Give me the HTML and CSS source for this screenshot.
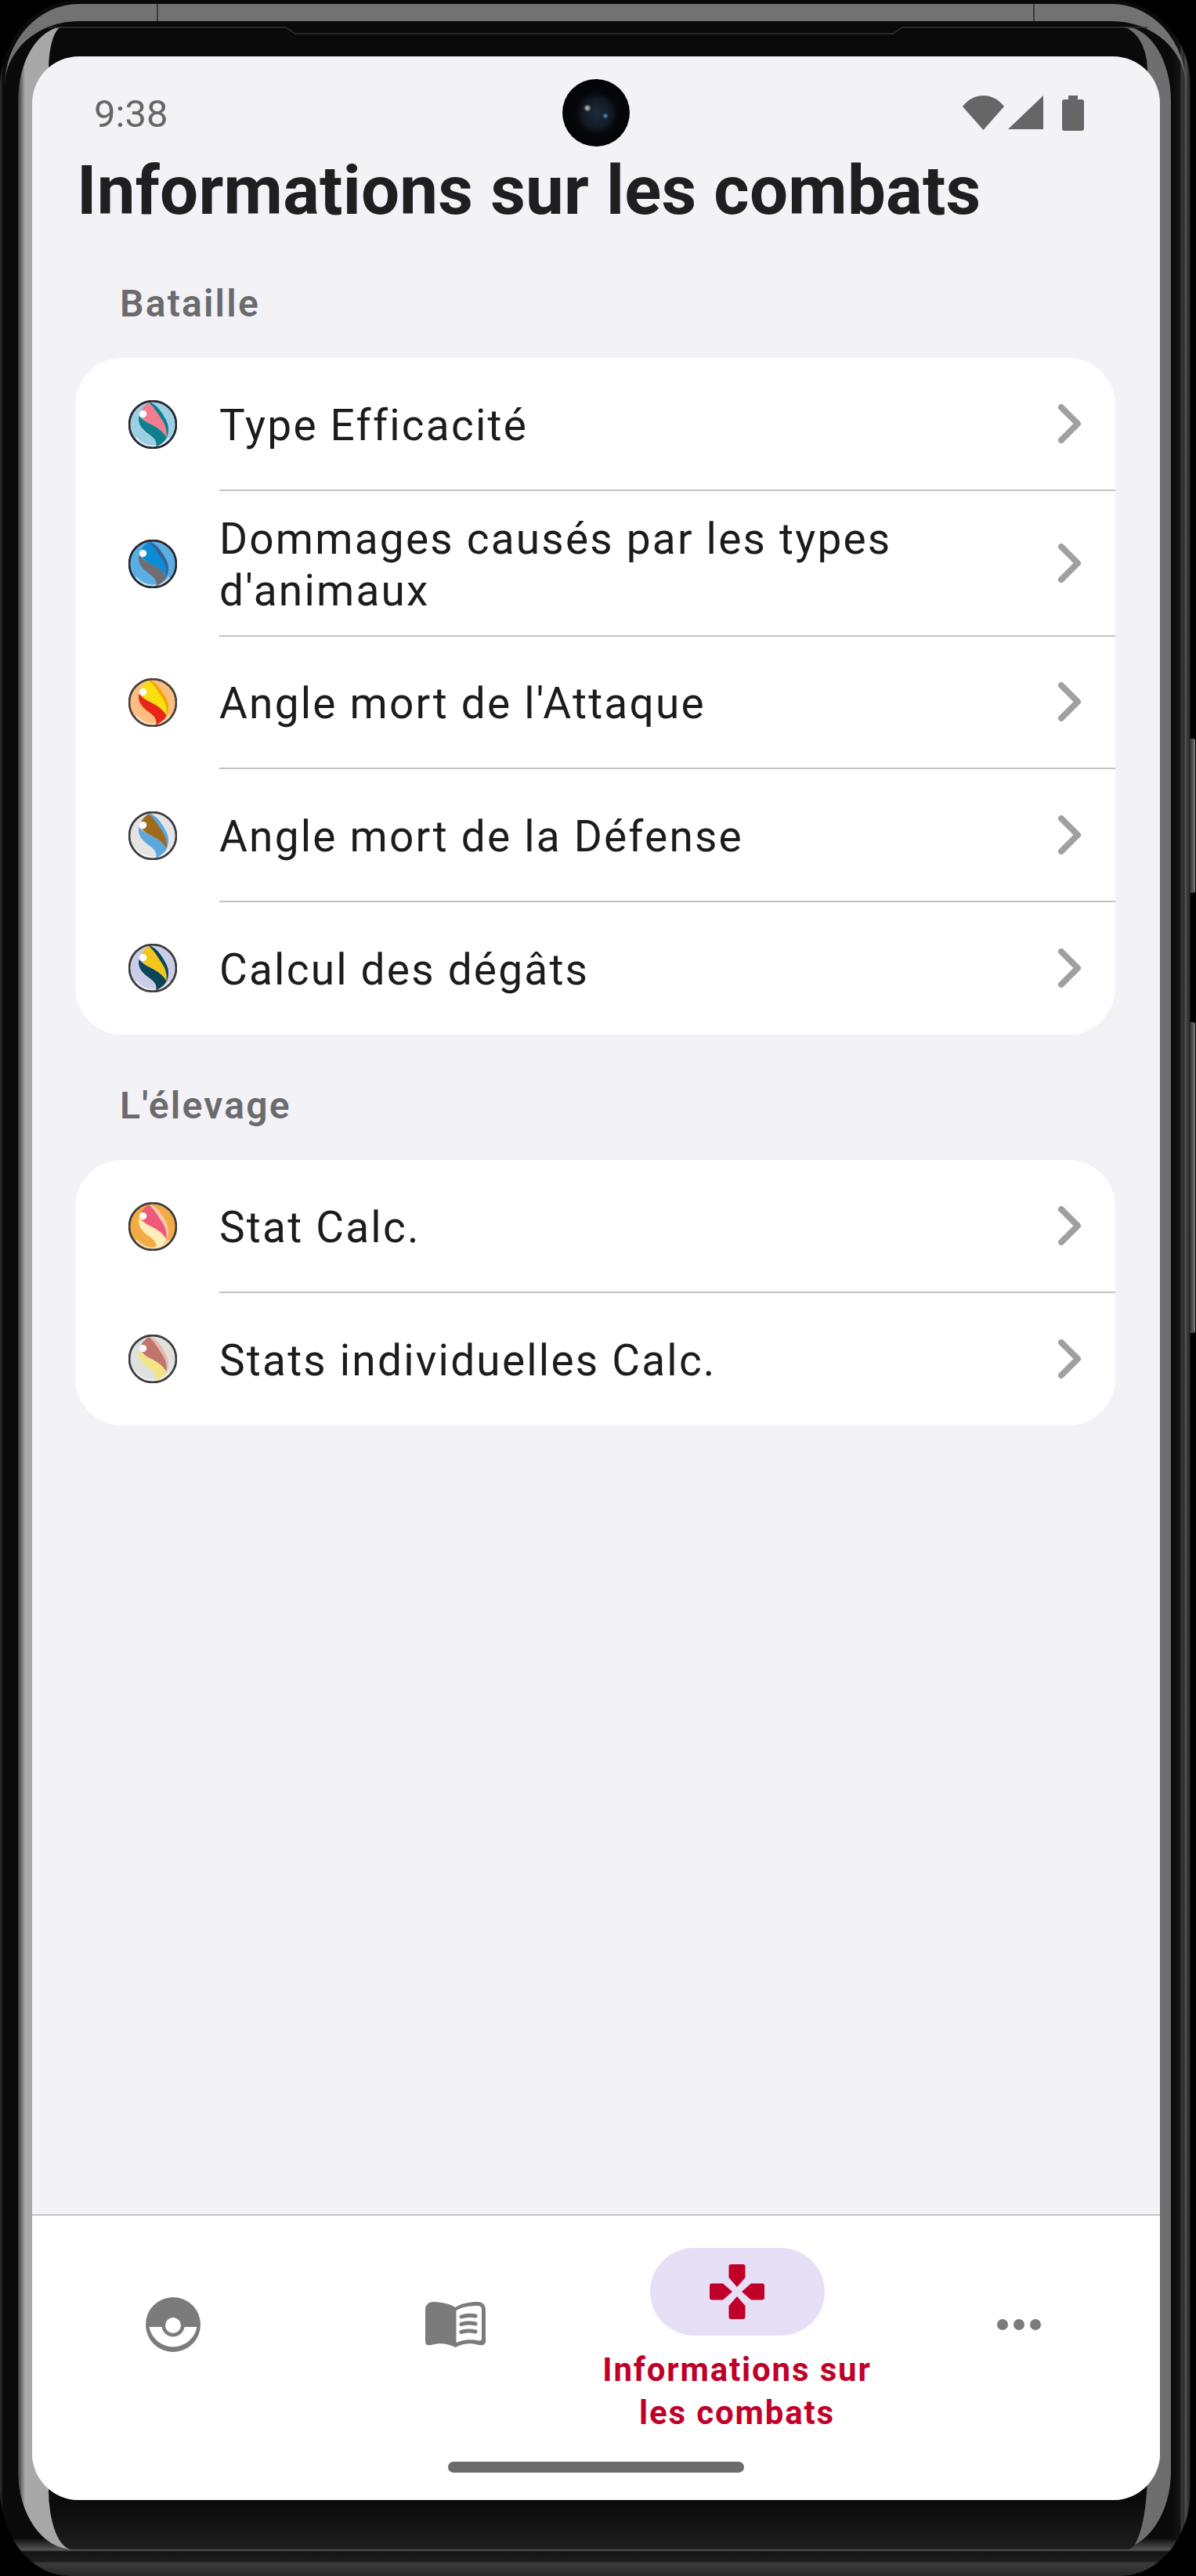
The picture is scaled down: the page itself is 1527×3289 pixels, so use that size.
FILE: index.html
```html
<!DOCTYPE html>
<html lang="fr">
<head>
    <meta charset="UTF-8">
    <meta name="viewport" content="width=device-width, initial-scale=1.0">
    <title>Informations sur les combats</title>
    <link rel="stylesheet" href="styles.css">
</head>
<body>
    <svg class="defs" width="0" height="0" aria-hidden="true">
        <symbol id="orb" viewBox="0 0 60 60">
            <circle class="orbBg" cx="30" cy="30" r="28.5"/>
            <path class="orbShine" d="M9 47A27 27 0 0 0 51 47"/>
            <path class="orbC" d="M26 2C36 7 40 13 45 22C50 30 51 38 47 47C45 36 40 24 32 16C29 12 27 7 26 2Z"/>
            <path class="orbA" d="M25 3C31 8 35 14 40 22C45 29 48 36 47 46C42 38 36 34 28 30C20 26 15 22 15 14C17 9 21 6 25 3Z"/>
            <path class="orbB" d="M13 19C11 28 16 35 24 41C31 46 36 50 34 58C41 54 46 50 47 46C42 38 36 34 28 30C20 26 15 22 13 19Z"/>
            <circle class="orbDot" cx="18" cy="17" r="4.5"/>
            <circle class="orbRing" cx="30" cy="30" r="29"/>
        </symbol>
        <symbol id="chevron" viewBox="0 0 30 50">
            <path d="M4 4L25 25L4 46" fill="none" stroke="#a0a0a0" stroke-width="8" stroke-linecap="round" stroke-linejoin="round"/>
        </symbol>
    </svg>

    <div class="device">
        <div class="sideButton powerBtn"></div>
        <div class="sideButton volumeBtn"></div>
        <div class="rim">
            <div class="bezel">
                <svg class="notchLine" viewBox="0 0 1403 10" aria-hidden="true">
                    <path d="M0 1H303L315 9H1078L1090 1H1403" fill="none" stroke="#333" stroke-width="1.5"/>
                </svg>
                <div class="screen">
                    <div class="camera"></div>
                    <div class="statusBar">
                        <span class="clock">9:38</span>
                        <div class="statusIcons">
                            <svg class="wifiIcon" viewBox="0 0 53 44"><path d="M0 14C7 5 16 0 26.5 0S46 5 53 14L26.5 44Z"/></svg>
                            <svg class="signalIcon" viewBox="0 0 45 43"><path d="M45 0V43H0Z"/></svg>
                            <svg class="batteryIcon" viewBox="0 0 28 45"><path d="M8 0H20V5H25Q28 5 28 8V42Q28 45 25 45H3Q0 45 0 42V8Q0 5 3 5H8Z"/></svg>
                        </div>
                    </div>

                    <main class="content">
                        <h1>Informations sur les combats</h1>

                        <h2>Bataille</h2>
                        <div class="card">
                            <div class="row">
                                <svg class="orb orbWater"><use href="#orb"/></svg>
                                <div class="rowBody"><span>Type Efficacité</span><svg class="chevron"><use href="#chevron"/></svg></div>
                            </div>
                            <div class="row">
                                <svg class="orb orbBlue"><use href="#orb"/></svg>
                                <div class="rowBody"><span>Dommages causés par les types d'animaux</span><svg class="chevron"><use href="#chevron"/></svg></div>
                            </div>
                            <div class="row">
                                <svg class="orb orbFire"><use href="#orb"/></svg>
                                <div class="rowBody"><span>Angle mort de l'Attaque</span><svg class="chevron"><use href="#chevron"/></svg></div>
                            </div>
                            <div class="row">
                                <svg class="orb orbGround"><use href="#orb"/></svg>
                                <div class="rowBody"><span>Angle mort de la Défense</span><svg class="chevron"><use href="#chevron"/></svg></div>
                            </div>
                            <div class="row">
                                <svg class="orb orbNight"><use href="#orb"/></svg>
                                <div class="rowBody"><span>Calcul des dégâts</span><svg class="chevron"><use href="#chevron"/></svg></div>
                            </div>
                        </div>

                        <h2>L'élevage</h2>
                        <div class="card">
                            <div class="row">
                                <svg class="orb orbPeach"><use href="#orb"/></svg>
                                <div class="rowBody"><span>Stat Calc.</span><svg class="chevron"><use href="#chevron"/></svg></div>
                            </div>
                            <div class="row">
                                <svg class="orb orbCream"><use href="#orb"/></svg>
                                <div class="rowBody"><span>Stats individuelles Calc.</span><svg class="chevron"><use href="#chevron"/></svg></div>
                            </div>
                        </div>
                    </main>

                    <nav class="bottomNav">
                        <div class="tabs">
                            <div class="tab">
                                <div class="tabIcon">
                                    <svg class="ballIcon" viewBox="0 0 70 70">
                                        <circle cx="35" cy="35" r="35" fill="#7b7b7b"/>
                                        <path d="M4.5 38H65.5A31 31 0 0 1 4.5 38Z" fill="#fff"/>
                                        <circle cx="35" cy="36" r="14.5" fill="#7b7b7b"/>
                                        <circle cx="35" cy="36" r="10" fill="#fff"/>
                                    </svg>
                                </div>
                            </div>
                            <div class="tab">
                                <div class="tabIcon">
                                    <svg class="bookIcon" viewBox="0 0 77 58">
                                        <path d="M0 10C0 4 4 0 10 0C20 0 30 2 38.5 7C46 2 56 0 67 0C73 0 77 4 77 10V50C77 55 73 56 68 55C58 52 48 53 38.5 58C28 53 18 52 8 55C3 56 0 55 0 50Z" fill="#7b7b7b"/>
                                        <path d="M39.5 11C46 7 55 5 67 5C70 5 72 7 72 9V47C72 49 70 50 68 49.5C58 47 48 48 39.5 52Z" fill="#fff"/>
                                        <path d="M46 19Q55 16 64 18M46 28.5Q55 26 64 28M46 38.5Q55 36 64 38" fill="none" stroke="#7b7b7b" stroke-width="5" stroke-linecap="round"/>
                                    </svg>
                                </div>
                            </div>
                            <div class="tab tabActive">
                                <div class="tabIcon">
                                    <svg class="padIcon" viewBox="0 0 70 70">
                                        <g id="padArm"><path d="M24.5 3Q24.5 0 27.5 0H42.5Q45.5 0 45.5 3V17L35 29L24.5 17Z"/></g>
                                        <use href="#padArm" transform="rotate(90 35 35)"/>
                                        <use href="#padArm" transform="rotate(180 35 35)"/>
                                        <use href="#padArm" transform="rotate(270 35 35)"/>
                                    </svg>
                                </div>
                                <span class="tabLabel">Informations sur les combats</span>
                            </div>
                            <div class="tab">
                                <div class="tabIcon">
                                    <svg class="moreIcon" viewBox="0 0 56 14">
                                        <circle cx="7" cy="7" r="7"/><circle cx="28" cy="7" r="7"/><circle cx="49" cy="7" r="7"/>
                                    </svg>
                                </div>
                            </div>
                        </div>
                        <div class="homeBar"></div>
                    </nav>
                </div>
            </div>
        </div>
    </div>
</body>
</html>
```
FILE: styles.css
```css
body {
    margin: 0;
    background: #000;
    font-family: Roboto, "Liberation Sans", sans-serif;
}
.defs {
    position: absolute;
}

/* phone frame */
.device {
    position: relative;
    box-sizing: border-box;
    width: 1520px;
    height: 3289px;
    padding: 34px 25px 0 23px;
    border-radius: 100px 100px 90px 90px / 110px;
    background:
        linear-gradient(90deg, #333 0, #0a0a0a 4px, #0a0a0a 1495px, #141414 1507px, #3c3c3c 1508px, #2a2a2a 1512px, #555 1513px, #1a1a1a 1520px) 0 0 / 100% 3240px no-repeat,
        linear-gradient(180deg, #0a0a0a 3240px, #4c4c4c 3254px, #555 3256px, #141414 3258px, #1c1c1c 3270px, #3c3c3c 3273px, #262626 3289px);
}
/* grey band that runs over the top edge and thins out at the corners */
.device::before {
    content: "";
    position: absolute;
    top: 5px;
    left: 6px;
    right: 6px;
    height: 130px;
    border-top: 22px solid #727272;
    border-radius: 95px 95px 0 0 / 105px 105px 0 0;
}
.device::after {
    content: "";
    position: absolute;
    top: 5px;
    left: 200px;
    width: 1117px;
    height: 22px;
    border-left: 2px solid #3a3a3a;
    border-right: 2px solid #3a3a3a;
}
.sideButton {
    position: absolute;
    right: -6px;
    width: 7px;
    border-radius: 0 3px 3px 0;
    background: linear-gradient(90deg, #2e2e2e, #555 60%, #888);
}
.powerBtn {
    top: 943px;
    height: 197px;
}
.volumeBtn {
    top: 1305px;
    height: 397px;
}
.rim {
    box-sizing: border-box;
    height: 3221px;
    padding-left: 39px;
    border-radius: 60px 60px 70px 70px / 95px 95px 100px 100px;
    background: linear-gradient(90deg, #3a3a3a, #a8a8a8 9px, #a8a8a8 18px, #6e6e6e 1458px, #6e6e6e);
}
.bezel {
    position: relative;
    box-sizing: border-box;
    width: 1403px;
    height: 3221px;
    padding-top: 38px;
    border-radius: 18px 36px 25px 30px / 55px 55px 100px 76px;
    background: linear-gradient(180deg, #0a0a0a 3158px, #1e1e1e 3221px);
}
.notchLine {
    position: absolute;
    top: 0;
    left: 0;
    width: 1403px;
    height: 10px;
}

/* screen */
.screen {
    position: relative;
    display: flex;
    flex-direction: column;
    width: 1440px;
    height: 3120px;
    margin-left: -21px;
    border-radius: 60px;
    overflow: hidden;
    background: #f2f2f7;
}
.camera {
    position: absolute;
    top: 29px;
    left: 50%;
    width: 86px;
    height: 86px;
    margin-left: -43px;
    border-radius: 50%;
    background:
        radial-gradient(circle at 32px 37px, #d8dcc8 0, rgba(216, 220, 200, 0) 5px),
        radial-gradient(circle at 55px 47px, #4fa8e0 0, rgba(79, 168, 224, 0) 4px),
        radial-gradient(circle at 44px 44px, #1b2a3a 0, #151a26 18px, #05070a 27px, #020203 100%);
}
.statusBar {
    box-sizing: border-box;
    display: flex;
    justify-content: space-between;
    height: 119px;
    padding: 44px 97px 0 79px;
}
.clock {
    height: 54px;
    font-size: 49px;
    line-height: 60px;
    color: #666;
}
.statusIcons {
    display: flex;
    gap: 5px;
    height: 45px;
    margin-top: 6px;
    fill: #666;
}
.wifiIcon {
    width: 53px;
    height: 44px;
}
.signalIcon {
    width: 45px;
    height: 43px;
}
.batteryIcon {
    width: 28px;
    height: 45px;
    margin-left: 19px;
}

/* list */
.content {
    flex: 1;
    padding: 0 57px 0 55px;
}
h1 {
    margin: 0 0 0 2px;
    padding-bottom: 2px;
    font-size: 87px;
    font-weight: 700;
    line-height: 104px;
    letter-spacing: .25px;
    color: #1f1f1f;
}
h2 {
    margin: 61px 0 39px 57px;
    font-size: 48px;
    font-weight: 600;
    line-height: 60px;
    letter-spacing: 2.2px;
    color: #6b6b6d;
}
.card {
    background: #fff;
    border-radius: 60px;
    overflow: hidden;
}
.row {
    display: flex;
    align-items: center;
    min-height: 169.5px;
}
.rowBody {
    flex: 1;
    box-sizing: border-box;
    align-self: stretch;
    display: flex;
    align-items: center;
    justify-content: space-between;
    padding: 0 43px 0 0;
    border-bottom: 2px solid #c2c2c2;
    font-size: 55px;
    line-height: 66px;
    letter-spacing: 2.2px;
    color: #1c1c1e;
}
.row:last-child .rowBody {
    border-bottom: none;
}
.rowBody span {
    max-width: 1000px;
    padding: 28px 0 24px;
}
.chevron {
    flex: none;
    width: 30px;
    height: 50px;
}

/* orb colours */
.orb {
    flex: none;
    width: 62px;
    height: 62px;
    margin: 0 54px 0 68px;
}
.orbBg { fill: var(--bg); }
.orbShine { fill: none; stroke: #fff; stroke-width: 3; opacity: .6; }
.orbA { fill: var(--a); }
.orbB { fill: var(--b); }
.orbC { fill: var(--c); }
.orbDot { fill: #fff; }
.orbRing { fill: none; stroke: var(--ring, #26262c); stroke-width: 2.6; }
.orbWater { --bg: #9ccfe2; --a: #f07e90; --b: #0e7f8c; --c: #0e7f8c; }
.orbBlue { --bg: #5baee2; --a: #0a8cd6; --b: #6f6f73; --c: #3c5f94; }
.orbFire { --bg: #fbbe80; --a: #f8e012; --b: #e8261a; --c: #f7a800; --ring: #4b4038; }
.orbGround { --bg: #e4e4e4; --a: #a06a1e; --b: #5ba7e0; --c: #5ba7e0; --ring: #3c3c3c; }
.orbNight { --bg: #c9cde8; --a: #f2c71a; --b: #0c4458; --c: #0c4458; --ring: #3c3c3c; }
.orbPeach { --bg: #f4ab45; --a: #ee5b7a; --b: #fdeebb; --c: #f9c9b0; --ring: #3c3c3c; }
.orbCream { --bg: #dfe1dd; --a: #c0756d; --b: #f3e48a; --c: #e8b9b0; --ring: #3c3c3c; }

/* bottom navigation */
.bottomNav {
    box-sizing: border-box;
    display: flex;
    flex-direction: column;
    height: 365px;
    border-top: 2px solid #c4c4c6;
    background: #fff;
}
.tabs {
    flex: 1;
    display: flex;
    padding-top: 41px;
}
.tab {
    flex: 1;
    display: flex;
    flex-direction: column;
    align-items: center;
    text-align: center;
}
.tabIcon {
    display: flex;
    align-items: center;
    justify-content: center;
    width: 223px;
    height: 112px;
    margin-top: 42px;
    border-radius: 56px;
}
.tabActive .tabIcon {
    margin-top: 0;
    background: #e7dff6;
}
.tabLabel {
    margin-top: 16px;
    font-size: 42px;
    font-weight: 700;
    line-height: 55px;
    letter-spacing: 1.85px;
    color: #c00028;
}
.ballIcon {
    width: 70px;
    height: 70px;
}
.bookIcon {
    width: 77px;
    height: 58px;
}
.padIcon {
    width: 70px;
    height: 70px;
    fill: #c00028;
}
.moreIcon {
    width: 56px;
    height: 14px;
    fill: #7b7b7b;
}
.homeBar {
    width: 378px;
    height: 14px;
    margin: 0 auto 35px;
    border-radius: 7px;
    background: #6b6b6b;
}
```
